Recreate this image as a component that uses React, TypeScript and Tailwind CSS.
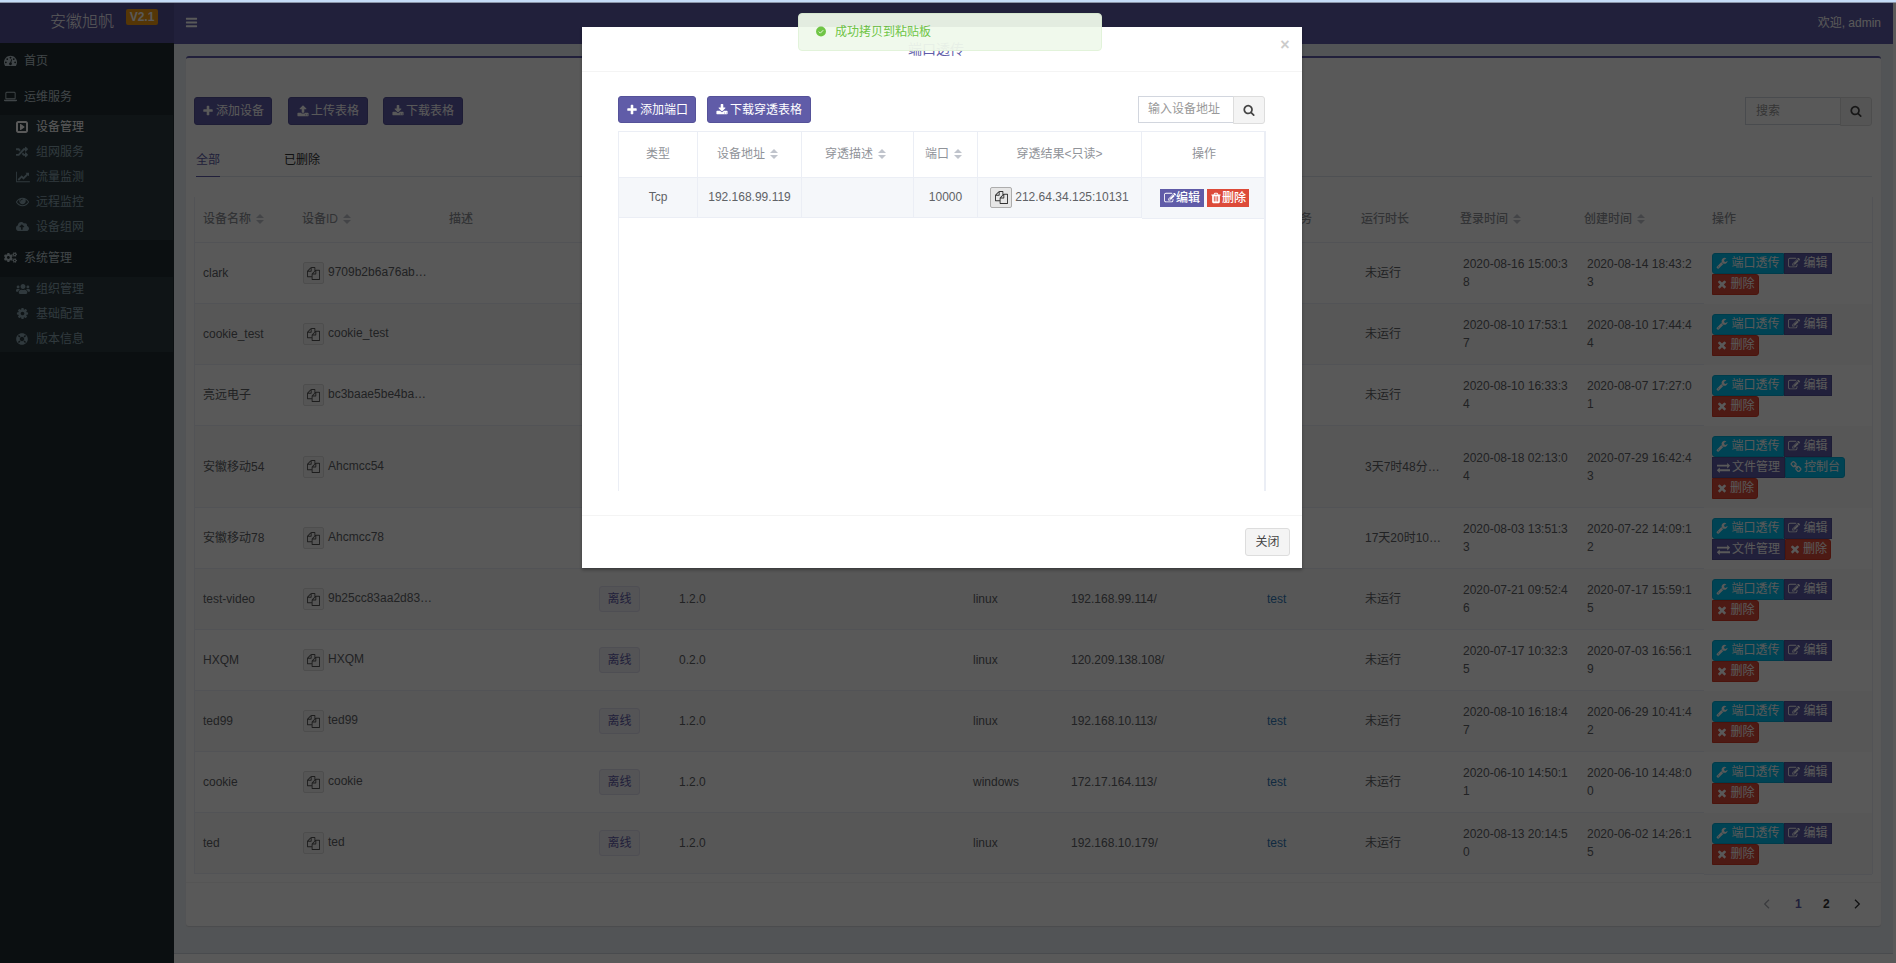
import React from "react";
import { FaRandom, FaCloudUploadAlt, FaCogs, FaUsers, FaLifeRing } from "react-icons/fa";

const FONT = "font-['Liberation_Sans','Noto_Sans_CJK_SC',sans-serif]";

const paths = {
  search:
    "M1216 832q0-185-131.5-316.5T768 384 451.5 515.5 320 832t131.5 316.5T768 1280t316.5-131.5T1216 832zm512 832q0 52-38 90t-90 38q-54 0-90-38l-343-342q-179 124-399 124-143 0-273.5-55.5t-225-150-150-225T64 832t55.5-273.5 150-225 225-150T768 128t273.5 55.5 225 150 150 225T1472 832q0 220-124 399l343 343q37 37 37 90z",
  plus:
    "M1600 736v192q0 40-28 68t-68 28h-416v416q0 40-28 68t-68 28h-192q-40 0-68-28t-28-68v-416h-416q-40 0-68-28t-28-68v-192q0-40 28-68t68-28h416v-416q0-40 28-68t68-28h192q40 0 68 28t28 68v416h416q40 0 68 28t28 68z",
  bars:
    "M1664 1344v128q0 26-19 45t-45 19h-1408q-26 0-45-19t-19-45v-128q0-26 19-45t45-19h1408q26 0 45 19t19 45zm0-512v128q0 26-19 45t-45 19h-1408q-26 0-45-19t-19-45v-128q0-26 19-45t45-19h1408q26 0 45 19t19 45zm0-512v128q0 26-19 45t-45 19h-1408q-26 0-45-19t-19-45v-128q0-26 19-45t45-19h1408q26 0 45 19t19 45z",
  download:
    "M1344 1344q0-26-19-45t-45-19-45 19-19 45 19 45 45 19 45-19 19-45zm256 0q0-26-19-45t-45-19-45 19-19 45 19 45 45 19 45-19 19-45zm128-224v320q0 40-28 68t-68 28h-1472q-40 0-68-28t-28-68v-320q0-40 28-68t68-28h465l135 136q58 56 136 56t136-56l136-136h464q40 0 68 28t28 68zm-325-569q17 41-14 70l-448 448q-18 19-45 19t-45-19l-448-448q-31-29-14-70 17-39 59-39h256v-448q0-26 19-45t45-19h256q26 0 45 19t19 45v448h256q42 0 59 39z",
  upload:
    "M1344 1472q0-26-19-45t-45-19-45 19-19 45 19 45 45 19 45-19 19-45zm256 0q0-26-19-45t-45-19-45 19-19 45 19 45 45 19 45-19 19-45zm128-224v320q0 40-28 68t-68 28h-1472q-40 0-68-28t-28-68v-320q0-40 28-68t68-28h427q21 56 70.5 92t110.5 36h256q61 0 110.5-36t70.5-92h427q40 0 68 28t28 68zm-325-648q-17 40-59 40h-256v448q0 26-19 45t-45 19h-256q-26 0-45-19t-19-45v-448h-256q-42 0-59-40-17-39 14-69l448-448q18-19 45-19t45 19l448 448q31 30 14 69z",
  times:
    "M1490 1322q0 40-28 68l-136 136q-28 28-68 28t-68-28l-294-294-294 294q-28 28-68 28t-68-28l-136-136q-28-28-28-68t28-68l294-294-294-294q-28-28-28-68t28-68l136-136q28-28 68-28t68 28l294 294 294-294q28-28 68-28t68 28l136 136q28 28 28 68t-28 68l-294 294 294 294q28 28 28 68z",
  copy:
    "M1696 384q40 0 68 28t28 68v1216q0 40-28 68t-68 28h-960q-40 0-68-28t-28-68v-288h-544q-40 0-68-28t-28-68v-672q0-40 20-88t48-76l408-408q28-28 76-48t88-20h416q40 0 68 28t28 68v328q68-40 128-40h416zm-544 213l-299 299h299v-299zm-640-384l-299 299h299v-299zm196 647l316-316v-416h-384v416q0 40-28 68t-68 28h-416v640h512v-256q0-40 20-88t48-76zm956 804v-1152h-384v416q0 40-28 68t-68 28h-416v640h896z",
  edit:
    "M888 1184l116-116-152-152-116 116v56h96v96h56zm440-720q-16-16-33 1l-350 350q-17 17-1 33t33-1l350-350q17-17 1-33zm80 594v190q0 119-84.5 203.5t-203.5 84.5h-832q-119 0-203.5-84.5t-84.5-203.5v-832q0-119 84.5-203.5t203.5-84.5h832q63 0 117 25 15 7 18 23 3 17-9 29l-49 49q-14 14-32 8-23-6-45-6h-832q-66 0-113 47t-47 113v832q0 66 47 113t113 47h832q66 0 113-47t47-113v-126q0-13 9-22l64-64q15-15 35-7t20 29zm-96-738l288 288-672 672h-288v-288zm444 132l-92 92-288-288 92-92q28-28 68-28t68 28l152 152q28 28 28 68t-28 68z",
  wrench:
    "M448 1472q0-26-19-45t-45-19-45 19-19 45 19 45 45 19 45-19 19-45zm644-420l-682 682q-37 37-90 37-52 0-91-37l-106-108q-38-36-38-90 0-53 38-91l681-681q39 98 114.5 173.5t173.5 114.5zm634-435q0 39-23 106-47 134-164.5 217.5t-258.5 83.5q-185 0-316.5-131.5t-131.5-316.5 131.5-316.5 316.5-131.5q58 0 121.5 16.5t107.5 46.5q16 11 16 28t-16 28l-293 169v224l193 107q5-3 79-48.5t135.5-81 70.5-35.5q15 0 23.5 10t8.5 25z",
  exchange:
    "M1792 1184v192q0 13-9.5 22.5t-22.5 9.5h-1376v192q0 13-9.5 22.5t-22.5 9.5q-12 0-24-10l-319-320q-9-9-9-22 0-14 9-23l320-320q9-9 23-9 13 0 22.5 9.5t9.5 22.5v192h1376q13 0 22.5 9.5t9.5 22.5zm0-544q0 14-9 23l-320 320q-9 9-23 9-13 0-22.5-9.5t-9.5-22.5v-192h-1376q-13 0-22.5-9.5t-9.5-22.5v-192q0-13 9.5-22.5t22.5-9.5h1376v-192q0-14 9-23t23-9q12 0 24 10l319 319q9 9 9 23z",
  link:
    "M1520 1216q0-40-28-68l-208-208q-28-28-68-28-42 0-72 32 3 3 19 18.5t21.5 21.5 15 19 13 25.5 3.5 27.5q0 40-28 68t-68 28q-15 0-27.5-3.5t-25.5-13-19-15-21.5-21.5-18.5-19q-33 31-33 73 0 40 28 68l206 207q27 27 68 27 40 0 68-26l147-146q28-28 28-67zm-703-705q0-40-28-68l-206-207q-28-28-68-28-39 0-68 27l-147 146q-28 28-28 67 0 40 28 68l208 208q27 27 68 27 42 0 72-31-3-3-19-18.5t-21.5-21.5-15-19-13-25.5-3.5-27.5q0-40 28-68t68-28q15 0 27.5 3.5t25.5 13 19 15 21.5 21.5 18.5 19q33-31 33-73zm895 705q0 120-85 203l-147 146q-83 83-203 83-121 0-204-85l-206-207q-83-83-83-203 0-123 88-209l-88-88q-86 88-208 88-120 0-204-84l-208-208q-84-84-84-204t85-203l147-146q83-83 203-83 121 0 204 85l206 207q83 83 83 203 0 123-88 209l88 88q86-88 208-88 120 0 204 84l208 208q84 84 84 204z",
  trash:
    "M704 1376v-704q0-14-9-23t-23-9h-64q-14 0-23 9t-9 23v704q0 14 9 23t23 9h64q14 0 23-9t9-23zm256 0v-704q0-14-9-23t-23-9h-64q-14 0-23 9t-9 23v704q0 14 9 23t23 9h64q14 0 23-9t9-23zm256 0v-704q0-14-9-23t-23-9h-64q-14 0-23 9t-9 23v704q0 14 9 23t23 9h64q14 0 23-9t9-23zm-544-992h448l-48-117q-7-9-17-11h-317q-10 2-17 11zm928 32v64q0 14-9 23t-23 9h-96v948q0 83-47 143.5t-113 60.5h-832q-66 0-113-58.5t-47-141.5v-952h-96q-14 0-23-9t-9-23v-64q0-14 9-23t23-9h309l70-167q15-37 54-63t79-26h320q40 0 79 26t54 63l70 167h309q14 0 23 9t9 23z",
  dashboard:
    "M384 1152q0-53-37.5-90.5t-90.5-37.5-90.5 37.5-37.5 90.5 37.5 90.5 90.5 37.5 90.5-37.5 37.5-90.5zm192-448q0-53-37.5-90.5t-90.5-37.5-90.5 37.5-37.5 90.5 37.5 90.5 90.5 37.5 90.5-37.5 37.5-90.5zm428 481l101-382q6-26-7.5-48.5t-38.5-29.5-48 6.5-30 39.5l-101 382q-60 5-107 43.5t-63 98.5q-20 77 20 146t117 89 146-20 89-117q16-60-6-117t-72-91zm660-33q0-53-37.5-90.5t-90.5-37.5-90.5 37.5-37.5 90.5 37.5 90.5 90.5 37.5 90.5-37.5 37.5-90.5zm-640-640q0-53-37.5-90.5t-90.5-37.5-90.5 37.5-37.5 90.5 37.5 90.5 90.5 37.5 90.5-37.5 37.5-90.5zm448 192q0-53-37.5-90.5t-90.5-37.5-90.5 37.5-37.5 90.5 37.5 90.5 90.5 37.5 90.5-37.5 37.5-90.5zm320 448q0 261-141 483-19 29-54 29h-1402q-35 0-54-29-141-221-141-483 0-182 71-348t191-286 286-191 348-71 348 71 286 191 191 286 71 348z",
  eye:
    "M1664 960q-152-236-381-353 61 104 61 225 0 185-131.5 316.5t-316.5 131.5-316.5-131.5-131.5-316.5q0-121 61-225-229 117-381 353 133 205 333.5 326.5t434.5 121.5 434.5-121.5 333.5-326.5zm-720-384q0-20-14-34t-34-14q-125 0-214.5 89.5t-89.5 214.5q0 20 14 34t34 14 34-14 14-34q0-86 61-147t147-61q20 0 34-14t14-34zm848 384q0 34-20 69-140 230-376.5 368.5t-499.5 138.5-499.5-139-376.5-368q-20-35-20-69t20-69q140-229 376.5-368t499.5-139 499.5 139 376.5 368q20 35 20 69z",
  cog:
    "M1152 896q0-106-75-181t-181-75-181 75-75 181 75 181 181 75 181-75 75-181zm512-109v222q0 12-8 23t-20 13l-185 28q-19 54-39 91 35 50 107 138 10 12 10 25t-9 23q-27 37-99 108t-94 71q-12 0-26-9l-138-108q-44 23-91 38-16 136-29 186-7 28-36 28h-222q-14 0-24.5-8.5t-11.5-21.5l-28-184q-49-16-90-37l-141 107q-10 9-25 9-14 0-25-11-126-114-165-168-7-10-7-23 0-12 8-23 15-21 51-66.5t54-70.5q-27-50-41-99l-183-27q-13-2-21-12.5t-8-23.5v-222q0-12 8-23t19-13l186-28q14-46 39-92-40-57-107-138-10-12-10-24 0-10 9-23 26-36 98.5-107.5t94.5-71.5q13 0 26 10l138 107q44-23 91-38 16-136 29-186 7-28 36-28h222q14 0 24.5 8.5t11.5 21.5l28 184q49 16 90 37l142-107q9-9 24-9 13 0 25 10 129 119 165 170 7 8 7 22 0 12-8 23-15 21-51 66.5t-54 70.5q26 50 41 98l183 28q13 2 21 12.5t8 23.5z",
  laptop:
    "M352 1280q-66 0-113-47t-47-113v-704q0-66 47-113t113-47h1088q66 0 113 47t47 113v704q0 66-47 113t-113 47zm-32-864v704q0 32 32 32h1088q32 0 32-32v-704q0-32-32-32h-1088q-32 0-32 32zM0 1344h1792v96q0 96-160 96h-1472q-160 0-160-96z",
  caretRight:
    "M1216 896q0 33-27 52l-448 320q-31 23-66 4-35-17-35-57v-640q0-40 35-57 35-18 66 5l448 320q27 19 27 53zm192 480v-960q0-32-32-32h-960q-32 0-32 32v960q0 32 32 32h960q32 0 32-32zm256-960v960q0 119-84.5 203.5t-203.5 84.5h-960q-119 0-203.5-84.5t-84.5-203.5v-960q0-119 84.5-203.5t203.5-84.5h960q119 0 203.5 84.5t84.5 203.5z",
};

type IconName = keyof typeof paths;

function Icon({ name, className = "size-3" }: { name: IconName; className?: string }) {
  return (
    <svg viewBox="0 0 1792 1792" fill="currentColor" className={`shrink-0 ${className}`}>
      <path d={paths[name]} fillRule="nonzero" />
    </svg>
  );
}

function LineChart() {
  return (
    <svg viewBox="0 0 2048 1792" fill="currentColor" className="h-3 w-[14px] shrink-0">
      <path d="M2048 1536v128h-2048v-1536h128v1408h1920zm-128-1248v435q0 21-19.5 29.5t-35.5-7.5l-121-121-633 633q-10 10-23 10t-23-10l-233-233-416 416-192-192 585-585q10-10 23-10t23 10l233 233 464-464-121-121q-16-16-7.5-35.5t29.5-19.5h435q14 0 23 9t9 23z" />
    </svg>
  );
}

function Sort() {
  return (
    <svg viewBox="0 0 8 10" className="ml-[5px] h-[10px] w-2 shrink-0" fill="#c0c4cc">
      <path d="M4 0 8 4H0zM4 10 0 6h8z" />
    </svg>
  );
}

function SideItem({ icon, label, active = false }: { icon: React.ReactNode; label: string; active?: boolean }) {
  return (
    <div className={`flex h-[25px] items-center pb-[2px] pl-4 ${active ? "text-white" : "text-[#8aa4af]"}`}>
      <span className="flex w-5 items-center">{icon}</span>
      {label}
    </div>
  );
}

function SideGroup({ icon, label }: { icon: React.ReactNode; label: string }) {
  return (
    <div className="flex h-9 items-center pb-px pl-1 text-[#b8c7ce]">
      <span className="flex w-5 items-center">{icon}</span>
      {label}
    </div>
  );
}

function Sidebar() {
  return (
    <aside className="w-[174px] shrink-0 bg-[#222d32]">
      <SideGroup icon={<Icon name="dashboard" className="size-[13px]" />} label="首页" />
      <SideGroup icon={<Icon name="laptop" className="size-[13px]" />} label="运维服务" />
      <div className="mr-px bg-[#2c3b41]">
        <SideItem icon={<Icon name="caretRight" className="-ml-px size-[14px]" />} label="设备管理" active />
        <SideItem icon={<FaRandom className="size-3" />} label="组网服务" />
        <SideItem icon={<LineChart />} label="流量监测" />
        <SideItem icon={<Icon name="eye" className="size-[13px]" />} label="远程监控" />
        <SideItem icon={<FaCloudUploadAlt className="size-[13px]" />} label="设备组网" />
      </div>
      <div className="flex h-[37px] items-center pb-[2px] pl-1 text-[#b8c7ce]">
        <span className="flex w-5 items-center">
          <FaCogs className="size-[13px]" />
        </span>
        系统管理
      </div>
      <div className="mr-px bg-[#2c3b41]">
        <SideItem icon={<FaUsers className="size-[14px]" />} label="组织管理" />
        <SideItem icon={<Icon name="cog" className="size-[13px]" />} label="基础配置" />
        <SideItem icon={<FaLifeRing className="size-3" />} label="版本信息" />
      </div>
    </aside>
  );
}

type Action = "port" | "edit" | "file" | "console" | "delete";

interface Device {
  name: string;
  id: string;
  version?: string;
  os?: string;
  ip?: string;
  service?: string;
  runtime: string;
  login: string;
  created: string;
  actions: Action[][];
}

const BASIC: Action[][] = [["port", "edit"], ["delete"]];

const devices: Device[] = [
  { name: "clark", id: "9709b2b6a76ab…", runtime: "未运行", login: "2020-08-16 15:00:38", created: "2020-08-14 18:43:23", actions: BASIC },
  { name: "cookie_test", id: "cookie_test", runtime: "未运行", login: "2020-08-10 17:53:17", created: "2020-08-10 17:44:44", actions: BASIC },
  { name: "亮远电子", id: "bc3baae5be4ba…", runtime: "未运行", login: "2020-08-10 16:33:34", created: "2020-08-07 17:27:01", actions: BASIC },
  { name: "安徽移动54", id: "Ahcmcc54", runtime: "3天7时48分…", login: "2020-08-18 02:13:04", created: "2020-07-29 16:42:43", actions: [["port", "edit"], ["file", "console"], ["delete"]] },
  { name: "安徽移动78", id: "Ahcmcc78", runtime: "17天20时10…", login: "2020-08-03 13:51:33", created: "2020-07-22 14:09:12", actions: [["port", "edit"], ["file", "delete"]] },
  { name: "test-video", id: "9b25cc83aa2d83…", version: "1.2.0", os: "linux", ip: "192.168.99.114/", service: "test", runtime: "未运行", login: "2020-07-21 09:52:46", created: "2020-07-17 15:59:15", actions: BASIC },
  { name: "HXQM", id: "HXQM", version: "0.2.0", os: "linux", ip: "120.209.138.108/", runtime: "未运行", login: "2020-07-17 10:32:35", created: "2020-07-03 16:56:19", actions: BASIC },
  { name: "ted99", id: "ted99", version: "1.2.0", os: "linux", ip: "192.168.10.113/", service: "test", runtime: "未运行", login: "2020-08-10 16:18:47", created: "2020-06-29 10:41:42", actions: BASIC },
  { name: "cookie", id: "cookie", version: "1.2.0", os: "windows", ip: "172.17.164.113/", service: "test", runtime: "未运行", login: "2020-06-10 14:50:11", created: "2020-06-10 14:48:00", actions: BASIC },
  { name: "ted", id: "ted", version: "1.2.0", os: "linux", ip: "192.168.10.179/", service: "test", runtime: "未运行", login: "2020-08-13 20:14:50", created: "2020-06-02 14:26:15", actions: BASIC },
];

const actionStyle: Record<Action, { icon: IconName; label: string; cls: string }> = {
  port: { icon: "wrench", label: "端口透传", cls: "w-[72px] gap-[3px] rounded-l-[3px] border-[#00acd6] bg-[#00c0ef]" },
  edit: { icon: "edit", label: "编辑", cls: "w-12 gap-[3px] border-[#555299] bg-[#605ca8]" },
  file: { icon: "exchange", label: "文件管理", cls: "w-[73px] gap-[2px] border-[#555299] bg-[#605ca8]" },
  console: { icon: "link", label: "控制台", cls: "w-[60px] gap-[2px] rounded-r-[3px] border-[#00acd6] bg-[#00c0ef]" },
  delete: { icon: "times", label: "删除", cls: "gap-[2px] rounded-r-[3px] border-[#d73925] bg-[#dd4b39]" },
};

const COLS = "grid grid-cols-[99px_147px_150px_80px_293px_99px_196px_94px_99px_124px_128px_168px]";

function DeviceRow({ d, index }: { d: Device; index: number }) {
  const tall = d.actions.length === 3;
  const bg = index % 2 ? "bg-[#fafafa]" : "bg-white";
  const deleteWidth = d.actions === BASIC ? "w-[47px]" : "w-[46px]";
  return (
    <div className={`${COLS} border-b border-[#ebeef5] text-[#606266] ${bg} ${tall ? "h-[82px]" : "h-[61px]"}`}>
      <div className="flex items-center pl-2">{d.name}</div>
      <div className="flex items-center pl-[9px]">
        <span className="mr-1 flex h-[22px] w-[21px] items-center justify-center rounded-[2px] border border-[#ddd] bg-[#f4f4f4] text-[#555]">
          <Icon name="copy" className="size-[13px]" />
        </span>
        <span className="pb-[2px]">{d.id}</span>
      </div>
      <div />
      <div className="flex items-center pl-2">
        {d.version && (
          <span className="flex h-[26px] w-[41px] items-center justify-center rounded-[3px] border border-[#dfdeee] bg-[#f0eff6] text-[#605ca8]">
            离线
          </span>
        )}
      </div>
      <div className="flex items-center pl-2">{d.version}</div>
      <div className="flex items-center pl-[9px]">{d.os}</div>
      <div className="flex items-center pl-2">{d.ip}</div>
      <div className="flex items-center pl-2 text-[#337ab7]">{d.service}</div>
      <div className="flex items-center pl-3">{d.runtime}</div>
      <div className="flex items-center pl-[11px] pr-1 leading-[18px]">
        <span className="w-[108px] break-all">{d.login}</span>
      </div>
      <div className="flex items-center pl-[11px] leading-[18px]">
        <span className="w-[108px] break-all">{d.created}</span>
      </div>
      <div className={`-mb-[2px] flex flex-col border-b border-[#ebeef5] pl-2 pt-[10px] ${bg}`}>
        {d.actions.map((line, i) => (
          <div key={i} className="flex h-[21px] shrink-0 text-white">
            {line.map((a) => (
              <span
                key={a}
                className={`flex h-[21px] items-center justify-center border pb-px ${actionStyle[a].cls} ${a === "delete" ? deleteWidth : ""}`}
              >
                <Icon name={actionStyle[a].icon} className={a === "file" ? "size-[13px]" : "size-3"} />
                {actionStyle[a].label}
              </span>
            ))}
          </div>
        ))}
      </div>
    </div>
  );
}

function ToolButton({ icon, label, cls }: { icon: IconName; label: string; cls: string }) {
  return (
    <span className={`flex items-center justify-center gap-[2px] rounded-[3px] border border-[#555299] bg-[#605ca8] text-white ${cls}`}>
      <Icon name={icon} className="size-3" />
      {label}
    </span>
  );
}

function DevicePanel() {
  return (
    <section className="ml-3 mt-3 h-[870px] w-[1695px] rounded-[3px] border-t-2 border-[#605ca8] bg-white shadow-[0_1px_1px_rgba(0,0,0,0.1)]">
      <div className="flex h-[107px] items-start pl-2 pr-[9px] pt-[39px]">
        <ToolButton icon="plus" label="添加设备" cls="h-7 w-[78px]" />
        <ToolButton icon="upload" label="上传表格" cls="ml-4 h-7 w-20" />
        <ToolButton icon="download" label="下载表格" cls="ml-[15px] h-7 w-20" />
        <div className="ml-auto flex">
          <div className="flex h-7 w-[96px] items-center border border-[#d2d6de] pl-[10px] text-[#999]">搜索</div>
          <div className="-ml-px flex h-[29px] w-8 items-center justify-center rounded-r-[3px] border border-[#ddd] bg-[#f4f4f4] pb-px text-[#444]">
            <Icon name="search" className="size-3" />
          </div>
        </div>
      </div>
      <div className="ml-[10px] mr-[9px] -mt-[22px] flex h-[34px] items-stretch border-b border-[#dfe4ed]">
        <div className="-mb-px flex w-6 items-center border-b border-[#605ca8] text-[#605ca8]">全部</div>
        <div className="ml-16 flex items-center text-[#303133]">已删除</div>
      </div>
      <div className="ml-2 mt-5 w-[1679px] border-l border-r border-[#ebeef5]">
        <div className={`${COLS} h-[46px] items-center border-b border-[#ebeef5] pb-[2px] text-[#909399] [&>div]:flex [&>div]:items-center [&>div]:pl-2 [&>div]:font-medium`}>
          <div>设备名称<Sort /></div>
          <div>设备ID<Sort /></div>
          <div>描述</div>
          <div />
          <div />
          <div />
          <div />
          <div className="justify-end pr-[41px]">服务</div>
          <div>运行时长</div>
          <div>登录时间<Sort /></div>
          <div>创建时间<Sort /></div>
          <div>操作</div>
        </div>
        {devices.map((d, i) => (
          <DeviceRow key={d.name} d={d} index={i} />
        ))}
      </div>
      <div className="mt-2 flex h-[43px] items-center justify-end border-t border-[#f4f4f4] pr-5 font-bold text-[#303133]">
        <svg viewBox="0 0 8 10" className="h-[10px] w-2" fill="none" stroke="#a8abb2" strokeWidth="1.3"><path d="M6 .7 1.7 5 6 9.3" /></svg>
        <span className="ml-[24px] w-[7px] text-[#605ca8]">1</span>
        <span className="ml-[21px] w-[7px]">2</span>
        <svg viewBox="0 0 8 10" className="ml-[23px] h-[10px] w-2" fill="none" stroke="currentColor" strokeWidth="1.3"><path d="M2 .7 6.3 5 2 9.3" /></svg>
      </div>
    </section>
  );
}

function PortModal() {
  const cell = "flex items-center justify-center border-r border-[#ebeef5]";
  return (
    <div className="absolute left-[582px] top-[27px] flex h-[541px] w-[720px] flex-col bg-white shadow-[0_2px_3px_rgba(0,0,0,0.3)]">
      <div className="flex h-[45px] items-center justify-center border-b border-[#f4f4f4] pr-[11px]">
        <span className="w-3" />
        <span className="flex-1 pr-[1px] text-center text-[14px] text-[#605ca8]">端口透传</span>
        <span className="w-3 pb-2 text-center text-[16px] font-bold leading-none text-[#ccc]">×</span>
      </div>
      <div className="h-[443px] pl-9 pr-[37px] pt-6">
        <div className="flex h-[35px] items-start">
          <ToolButton icon="plus" label="添加端口" cls="h-[27px] w-[78px]" />
          <ToolButton icon="download" label="下载穿透表格" cls="ml-[11px] h-[27px] w-[104px]" />
          <div className="ml-auto flex">
            <div className="flex h-[27px] w-[96px] items-center border border-[#d2d6de] pb-px pl-[9px] text-[#999]">输入设备地址</div>
            <div className="-ml-px flex h-7 w-8 items-center justify-center rounded-r-[3px] border border-[#ddd] bg-[#f4f4f4] pb-px text-[#444]">
              <Icon name="search" className="size-3" />
            </div>
          </div>
        </div>
        <div className="-mr-px h-[360px] border-l border-r-2 border-t border-[#ebeef5]">
          <div className="grid h-[46px] grid-cols-[79px_104px_112px_64px_164px_122px] border-b border-[#ebeef5] text-[#909399]">
            <div className={`${cell} pb-px`}>类型</div>
            <div className={`${cell} pb-px pr-[4px]`}>设备地址<Sort /></div>
            <div className={`${cell} pb-px pr-[4px]`}>穿透描述<Sort /></div>
            <div className={`${cell} pb-px pr-[4px]`}>端口<Sort /></div>
            <div className={`${cell} pb-px`}>穿透结果&lt;只读&gt;</div>
            <div className="flex items-center justify-center pb-px pl-[2px]">操作</div>
          </div>
          <div className="grid h-10 grid-cols-[79px_104px_112px_64px_164px_122px] border-b border-[#ebeef5] bg-[#f5f7fa] text-[#606266]">
            <div className={`${cell} pb-px`}>Tcp</div>
            <div className={`${cell} pb-px`}>192.168.99.119</div>
            <div className={cell} />
            <div className={`${cell} pb-px`}>10000</div>
            <div className={`${cell} pb-px`}>
              <span className="mr-[3px] flex h-[21px] w-[22px] items-center justify-center rounded-[2px] border border-[#adadad] bg-[#e6e6e6] text-[#333]">
                <Icon name="copy" className="size-[13px]" />
              </span>
              212.64.34.125:10131
            </div>
            <div className="-mb-[2px] flex items-center gap-[3px] border-b border-[#ebeef5] bg-[#f5f7fa] pl-[18px] text-white">
              <span className="flex h-[18px] w-11 items-center justify-center bg-[#605ca8] font-medium">
                <Icon name="edit" className="size-3" />编辑
              </span>
              <span className="flex h-[18px] w-[42px] items-center justify-center bg-[#dd4b39] font-medium">
                <Icon name="trash" className="size-3" />删除
              </span>
            </div>
          </div>
        </div>
      </div>
      <div className="flex h-[53px] items-start justify-end border-t border-[#f4f4f4] pr-3 pt-3">
        <span className="flex h-7 w-[45px] items-center justify-center rounded-[3px] border border-[#ddd] bg-[#f4f4f4] pb-px text-[#444]">关闭</span>
      </div>
    </div>
  );
}

export default function App() {
  return (
    <div className={`relative flex h-[963px] w-[1896px] flex-col overflow-hidden bg-white text-[12px] leading-[18px] ${FONT}`}>
      <div className="h-[3px] shrink-0 border-b border-[#8b95a8] bg-[#c5dcf8]" />
      <div className="relative flex min-h-0 flex-1 flex-col">
        <header className="flex h-[41px] shrink-0 pr-[3px] text-white">
          <div className="flex h-[41px] w-[174px] items-start bg-[#555299] pl-[50px]">
            <span className="pt-[7px] text-[16px] font-light leading-6">安徽旭帆</span>
            <span className="ml-3 mt-[6px] flex h-4 w-8 items-center justify-center rounded-[2px] bg-[#f39c12] text-[12px] font-bold">V2.1</span>
          </div>
          <div className="flex flex-1 items-center justify-between bg-[#605ca8] pl-3 pr-3">
            <Icon name="bars" className="-ml-px mb-[2px] size-[13px]" />
            <span className="pb-px">欢迎, admin</span>
          </div>
        </header>
        <div className="-mt-px flex min-h-0 flex-1">
          <Sidebar />
          <main className="mt-px flex flex-1 flex-col bg-[#ecf0f5]">
            <DevicePanel />
            <div className="mt-[27px] flex-1 border-t border-[#d2d6de] bg-white" />
          </main>
          <div className="w-[3px]" />
        </div>
        <div className="absolute inset-0 bg-black/65" />
      </div>
      <PortModal />
      <div className="absolute left-[798px] top-[13px] flex h-[38px] w-[304px] items-center rounded-[4px] border border-[#e1f3d8] bg-[#f0f9eb] pl-4 text-[#67c23a] opacity-[0.94]">
        <svg viewBox="0 0 12 12" className="mr-2 size-3 pb-px">
          <circle cx="6" cy="6" r="5.4" fill="#67c23a" />
          <path d="m3.6 6.1 1.7 1.7 3.1-3.2" fill="none" stroke="#f0f9eb" strokeWidth="1" />
        </svg>
        <span className="pb-px">成功拷贝到粘贴板</span>
      </div>
    </div>
  );
}
